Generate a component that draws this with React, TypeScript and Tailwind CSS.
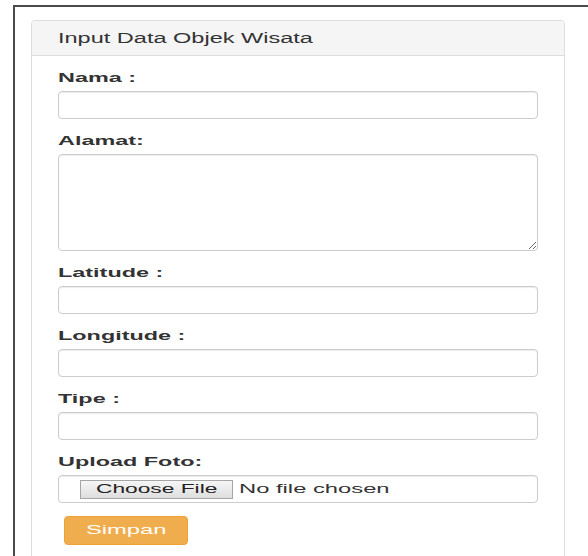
import { useState } from 'react';

const font = { fontFamily: '"Liberation Sans", Arial, sans-serif' };

function Label({ text, htmlFor }: { text: string; htmlFor: string }) {
  return (
    <label htmlFor={htmlFor} className="block h-[17px] pt-[2px] mb-[6px] text-[13px] leading-[15px] font-bold text-[#333]">
      <span className="inline-block origin-left scale-x-[1.8] whitespace-nowrap">{text}</span>
    </label>
  );
}

const inputCls =
  'block w-full h-[28px] rounded-[4px] border border-[#ccc] bg-white shadow-[inset_0_1px_1px_rgba(0,0,0,0.075)] outline-none';

export default function App() {
  const [fileName, setFileName] = useState('');

  return (
    <div className="w-[588px] h-[556px] bg-white overflow-hidden" style={font}>
      <div className="ml-[13px] mt-[5px] h-[551px] border-l-2 border-t-2 border-[#4a4a4a] pl-[16px] pt-[13px] pr-[23px]">
        <div className="h-[600px] rounded-[4px] border border-[#ddd] bg-white">
          <div className="h-[35px] flex items-center px-[26px] bg-[#f5f5f5] border-b border-[#ddd] rounded-t-[4px] text-[14px] text-[#333]">
            <span className="inline-block origin-left scale-x-[1.68] whitespace-nowrap">Input Data Objek Wisata</span>
          </div>

          <form className="px-[26px] pt-[12px]" onSubmit={e => e.preventDefault()}>
            <Label text="Nama :" htmlFor="nama" />
            <input id="nama" type="text" className={`${inputCls} mb-[12px]`} />

            <Label text="Alamat:" htmlFor="alamat" />
            <textarea id="alamat" className="block w-full h-[97px] mb-[12px] rounded-[4px] border border-[#ccc] bg-white shadow-[inset_0_1px_1px_rgba(0,0,0,0.075)] outline-none" />

            <Label text="Latitude :" htmlFor="latitude" />
            <input id="latitude" type="text" className={`${inputCls} mb-[12px]`} />

            <Label text="Longitude :" htmlFor="longitude" />
            <input id="longitude" type="text" className={`${inputCls} mb-[12px]`} />

            <Label text="Tipe :" htmlFor="tipe" />
            <input id="tipe" type="text" className={`${inputCls} mb-[12px]`} />

            <Label text="Upload Foto:" htmlFor="foto" />
            <label htmlFor="foto" className="flex items-center w-full h-[28px] pl-[21px] rounded-[4px] border border-[#ccc] bg-white shadow-[inset_0_1px_1px_rgba(0,0,0,0.075)]">
              <span className="flex items-center justify-center w-[153px] h-[19px] border border-[#a6a6a6] bg-gradient-to-b from-[#f6f6f6] to-[#dedede] text-[13px] text-[#222]">
                <span className="inline-block scale-x-[1.75] whitespace-nowrap">Choose File</span>
              </span>
              <span className="ml-[6px] text-[13.5px] text-[#333]">
                <span className="inline-block origin-left scale-x-[1.76] whitespace-nowrap">{fileName || 'No file chosen'}</span>
              </span>
              <input
                id="foto"
                type="file"
                className="hidden"
                onChange={e => setFileName(e.target.files?.[0]?.name ?? '')}
              />
            </label>

            <button
              type="submit"
              className="flex items-center justify-center mt-[13px] ml-[6px] w-[124px] h-[29px] rounded-[4px] border border-[#eea236] bg-[#f0ad4e] text-[12.5px] text-white"
            >
              <span className="inline-block scale-x-[1.9] whitespace-nowrap">Simpan</span>
            </button>
          </form>
        </div>
      </div>
    </div>
  );
}
